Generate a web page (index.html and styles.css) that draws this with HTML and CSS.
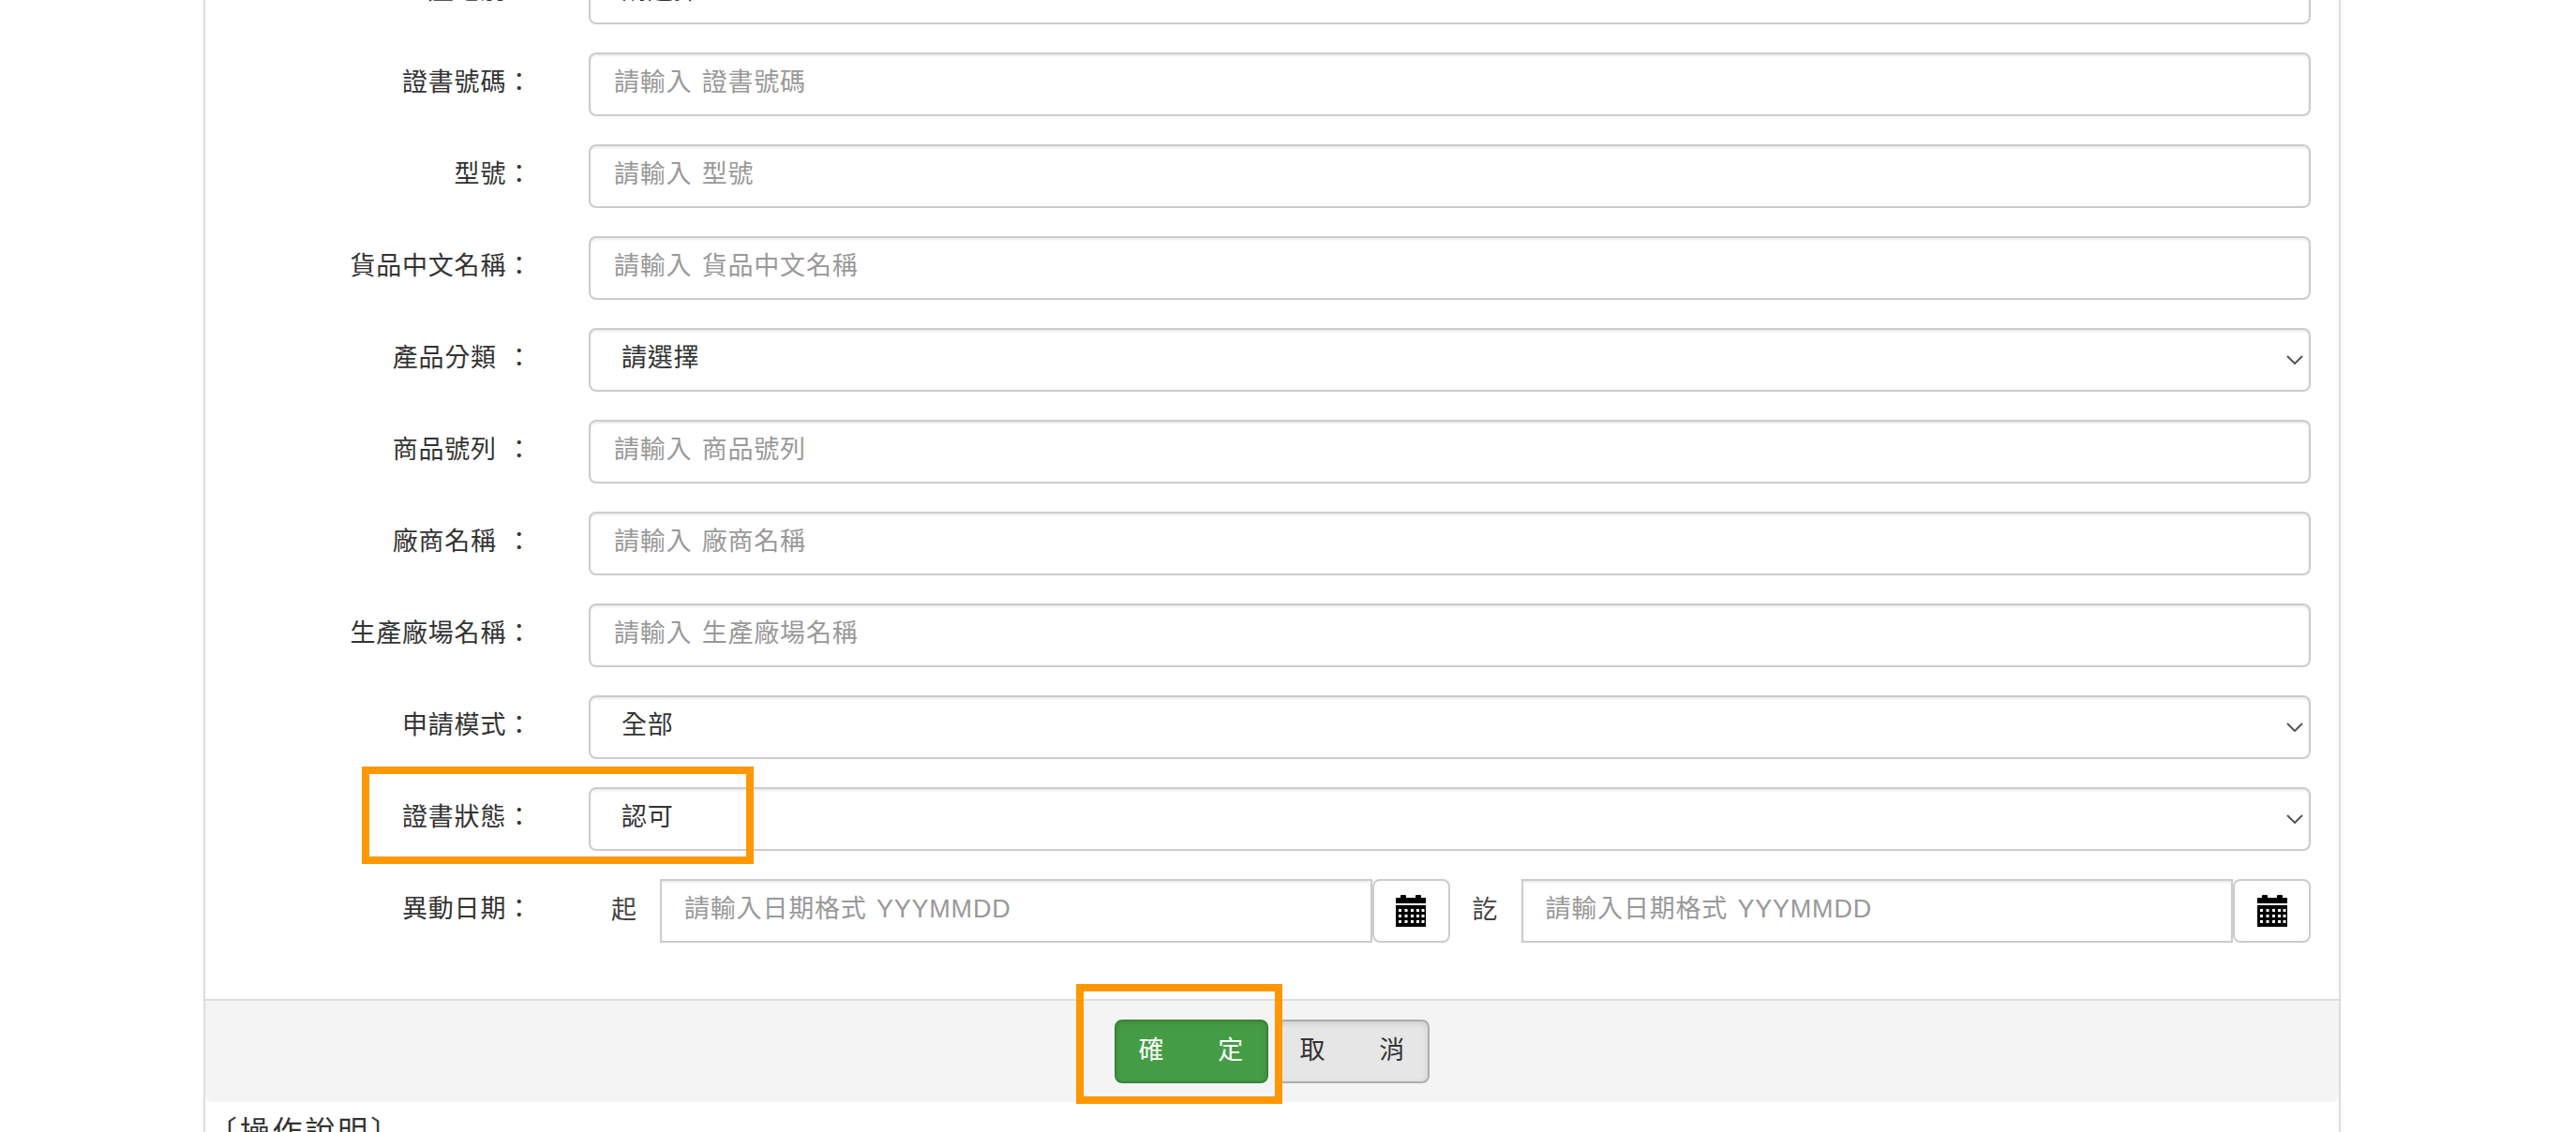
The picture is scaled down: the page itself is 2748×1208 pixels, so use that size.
FILE: index.html
```html
<!DOCTYPE html>
<html lang="zh-Hant">
<head>
<meta charset="utf-8">
<title>查詢</title>
<link rel="stylesheet" href="styles.css">
</head>
<body>
<div class="panel">
  <form class="form">
    <div class="row"><label class="lbl">產地別：</label><div class="ctl select"><span class="val">請選擇</span><svg class="chev" viewBox="0 0 18 10"><path d="M1 1l8 8 8-8"/></svg></div></div>
    <div class="row"><label class="lbl">證書號碼：</label><div class="ctl ph">請輸入 證書號碼</div></div>
    <div class="row"><label class="lbl">型號：</label><div class="ctl ph">請輸入 型號</div></div>
    <div class="row"><label class="lbl">貨品中文名稱：</label><div class="ctl ph">請輸入 貨品中文名稱</div></div>
    <div class="row"><label class="lbl">產品分類 ：</label><div class="ctl select"><span class="val">請選擇</span><svg class="chev" viewBox="0 0 18 10"><path d="M1 1l8 8 8-8"/></svg></div></div>
    <div class="row"><label class="lbl">商品號列 ：</label><div class="ctl ph">請輸入 商品號列</div></div>
    <div class="row"><label class="lbl">廠商名稱 ：</label><div class="ctl ph">請輸入 廠商名稱</div></div>
    <div class="row"><label class="lbl">生產廠場名稱：</label><div class="ctl ph">請輸入 生產廠場名稱</div></div>
    <div class="row"><label class="lbl">申請模式：</label><div class="ctl select"><span class="val">全部</span><svg class="chev" viewBox="0 0 18 10"><path d="M1 1l8 8 8-8"/></svg></div></div>
    <div class="row"><label class="lbl">證書狀態：</label><div class="ctl select"><span class="val">認可</span><svg class="chev" viewBox="0 0 18 10"><path d="M1 1l8 8 8-8"/></svg></div></div>
    <div class="row last"><label class="lbl">異動日期：</label>
      <div class="dates">
        <span class="dl">起</span>
        <div class="dinput">請輸入日期格式 YYYMMDD</div>
        <div class="cal"><svg viewBox="0 0 32 34"><path d="M0 3h5V1q0-1 1-1h4q1 0 1 1v2h10V1q0-1 1-1h4q1 0 1 1v2h5v6H0z"/><path fill-rule="evenodd" d="M0 11h32v23H0zM3 15v3h3v-3zM9.500 15v3h3v-3zM16 15v3h3v-3zM22 15v3h3v-3zM27.500 15v3h3v-3zM3 21v3h3v-3zM9.500 21v3h3v-3zM16 21v3h3v-3zM22 21v3h3v-3zM27.500 21v3h3v-3zM3 27v3h3v-3zM9.500 27v3h3v-3zM16 27v3h3v-3zM22 27v3h3v-3zM27.500 27v3h3v-3z"/></svg></div>
        <span class="dl">訖</span>
        <div class="dinput">請輸入日期格式 YYYMMDD</div>
        <div class="cal"><svg viewBox="0 0 32 34"><path d="M0 3h5V1q0-1 1-1h4q1 0 1 1v2h10V1q0-1 1-1h4q1 0 1 1v2h5v6H0z"/><path fill-rule="evenodd" d="M0 11h32v23H0zM3 15v3h3v-3zM9.500 15v3h3v-3zM16 15v3h3v-3zM22 15v3h3v-3zM27.500 15v3h3v-3zM3 21v3h3v-3zM9.500 21v3h3v-3zM16 21v3h3v-3zM22 21v3h3v-3zM27.500 21v3h3v-3zM3 27v3h3v-3zM9.500 27v3h3v-3zM16 27v3h3v-3zM22 27v3h3v-3zM27.500 27v3h3v-3z"/></svg></div>
      </div>
    </div>
    <div class="mark mark-state"></div>
  </form>
  <div class="footer">
    <div class="btn ok">確　　定</div>
    <div class="btn cancel">取　　消</div>
    <div class="mark mark-ok"></div>
  </div>
  <p class="note">〔操作說明〕</p>
</div>
</body>
</html>
```
FILE: styles.css
```css
* { box-sizing: border-box; }
html, body { margin: 0; height: 100%; overflow: hidden; background: #fff; }
body {
  font-family: "Liberation Sans", "Noto Sans CJK TC", sans-serif;
  font-size: 27px;
  letter-spacing: .8px;
  word-spacing: 2px;
  color: #333;
}
.panel {
  width: 2280px;
  margin: -42px 0 0 217px;
  border-left: 2px solid #ddd;
  border-right: 2px solid #ddd;
  min-height: 1400px;
}
.form { position: relative; padding: 0 30px 0 0; }
.row { display: flex; align-items: center; height: 68px; margin-bottom: 30px; }
.row.last { margin-bottom: 60px; }
.lbl { width: 349px; text-align: right; flex: none; padding-bottom: 10px; }
.ctl {
  flex: 1;
  margin-left: 60px;
  height: 68px;
  display: flex;
  align-items: center;
  border: 2px solid #ccc;
  border-radius: 8px;
  padding: 0 25px;
  box-shadow: inset 0 2px 2px rgba(0,0,0,.075);
  background: #fff;
}
.ph { color: #999; padding-bottom: 10px; }
.select { justify-content: space-between; padding: 0 6px 0 33px; }
.val { padding-bottom: 10px; }
.chev { width: 18px; height: 10px; fill: none; stroke: #555; stroke-width: 2; }
.dates { flex: 1; min-width: 0; margin-left: 60px; display: flex; align-items: center; height: 68px; }
.dl { width: 76px; padding: 0 0 8px 24px; flex: none; color: #444; }
.dinput {
  flex: 1;
  min-width: 0;
  height: 68px;
  display: flex;
  align-items: center;
  border: 2px solid #ccc;
  padding: 0 24px 10px;
  color: #999;
  box-shadow: inset 0 2px 2px rgba(0,0,0,.075);
}
.cal {
  flex: none;
  width: 83px;
  height: 68px;
  border: 2px solid #ccc;
  border-radius: 8px;
  display: flex;
  align-items: center;
  justify-content: center;
}
.cal svg { width: 32px; height: 34px; fill: #000; }
.footer {
  position: relative;
  height: 110px;
  background: #f4f4f4;
  border-top: 2px solid #ddd;
  display: flex;
  justify-content: center;
  align-items: center;
  gap: 8px;
  border-radius: 0 0 8px 8px;
}
.btn {
  width: 164px;
  height: 68px;
  padding-bottom: 7px;
  display: flex;
  align-items: center;
  justify-content: center;
  border-radius: 8px;
  letter-spacing: 1.300px;
}
.ok { color: #fff; background: #449d44; border: 2px solid #398439; box-shadow: inset 0 2px 6px rgba(0,0,0,.1); }
.cancel { color: #333; background: #e6e6e6; border: 2px solid #adadad; box-shadow: inset 0 2px 6px rgba(0,0,0,.12); }
.note { margin: 6px 0 0 2px; font-size: 32px; letter-spacing: 2.800px; color: #333; }
.mark { position: absolute; border: 8px solid #ff9800; pointer-events: none; }
.mark-state { left: 167px; top: 860px; width: 418px; height: 104px; }
.mark-ok { left: 929px; top: -18px; width: 220px; height: 128px; }
```
